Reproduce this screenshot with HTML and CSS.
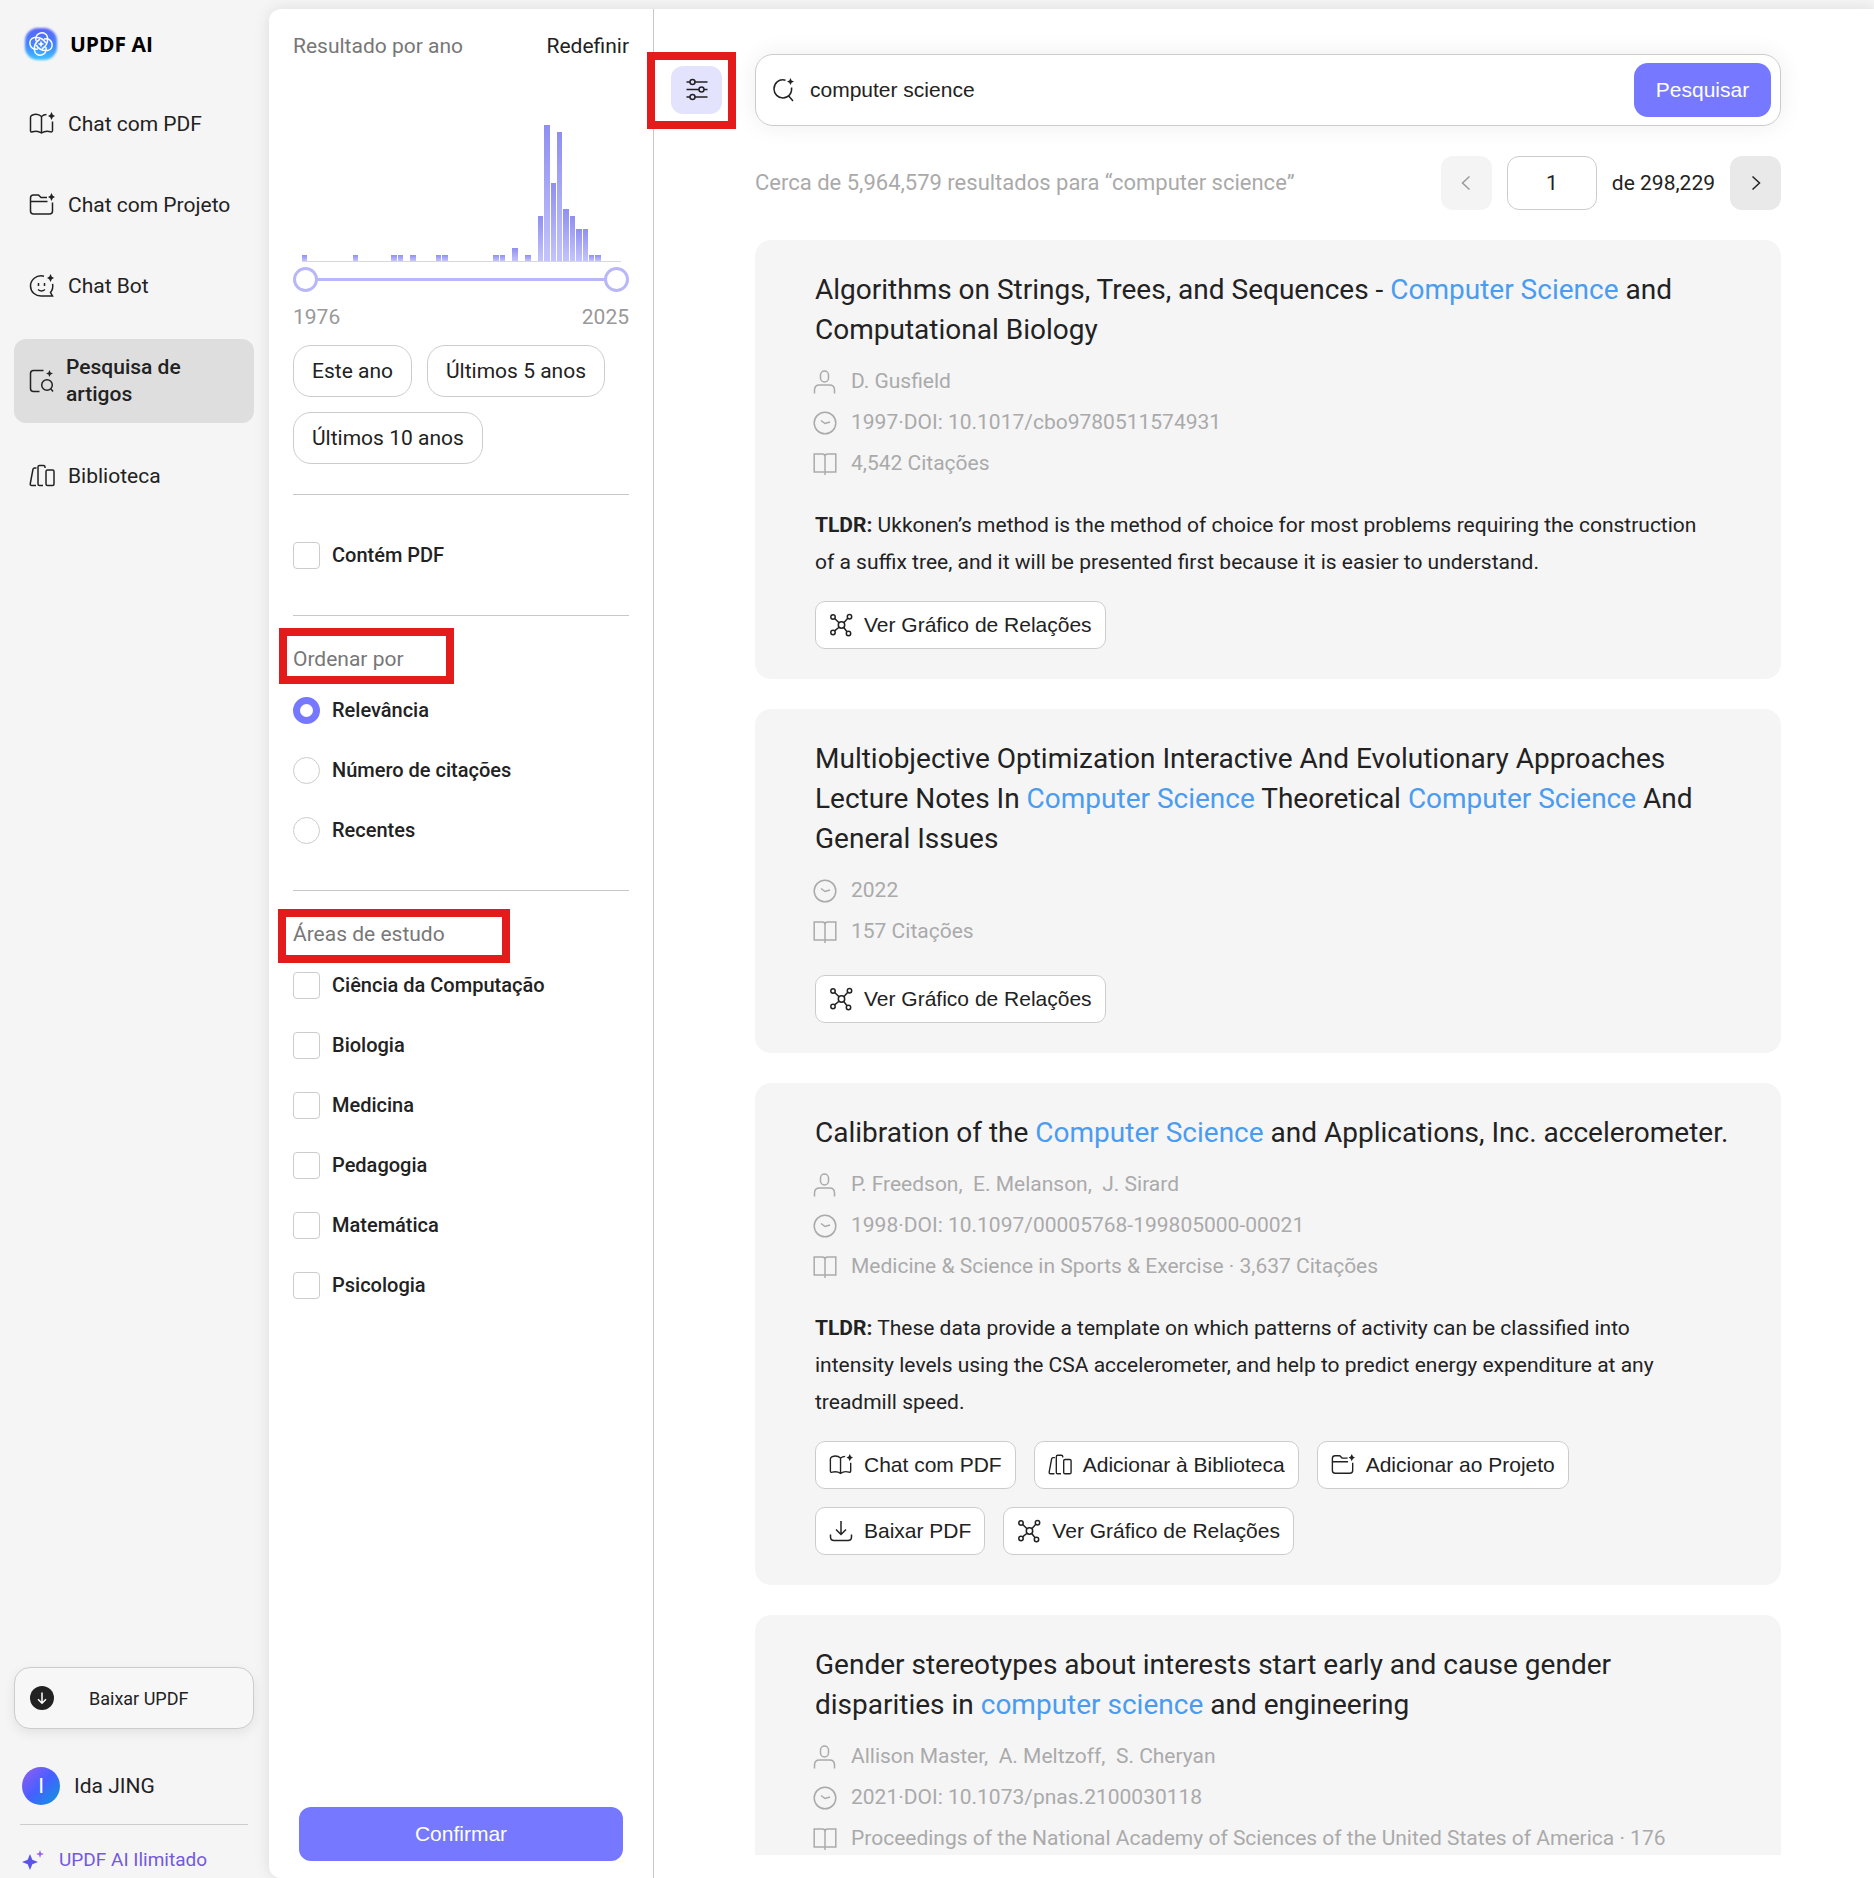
FILE: index.html
```html
<!DOCTYPE html>
<html lang="pt">
<head>
  <meta charset="UTF-8">
  <meta name="viewport" content="width=device-width, initial-scale=1">
  <title>UPDF AI - Pesquisa de artigos</title>
  <link rel="stylesheet" href="styles.css">
</head>
<body>
  <!-- Ícones -->
  <svg class="sprite" aria-hidden="true">
    <symbol id="i-chatpdf" viewBox="0 0 26 24">
      <path d="M12.5 4.5C10 2.200 6 1.800 3 3.200Q1.500 4 1.500 5.500V18.500Q1.500 20.500 3.500 19.800C7 18.800 9.500 19 12.500 21C15.500 19 18.500 18.800 21.500 19.800Q23.500 20.300 23.500 18.500V9.500M12.500 4.500V21M12.500 4.500C14 3.200 15.500 2.600 17.500 2.600"/>
      <path class="fill" d="M22.500 0L23.800 2.700L26 4L23.800 5.200L22.500 8L21.200 5.200L19 4L21.200 2.700Z"/>
    </symbol>
    <symbol id="i-folder" viewBox="0 0 26 24">
      <path d="M18 4.500H12L9.500 2H4.500Q1.500 2 1.500 5V18Q1.500 21 4.500 21H20.500Q23.500 21 23.500 18V9.500M1.500 8.500H18.500"/>
      <path class="fill" d="M22.500 0L23.800 2.700L26 4L23.800 5.200L22.500 8L21.200 5.200L19 4L21.200 2.700Z"/>
    </symbol>
    <symbol id="i-bot" viewBox="0 0 26 24">
      <path d="M15 2.200C7 .5 1.500 6 1.500 12C1.500 18 6.500 22 12 22H23.500L21.500 18.500C23.500 16 24.200 13 23.600 9.800M9.500 9V12M15.500 9V12M9 15.500Q12.500 18.500 16 15.500"/>
      <path class="fill" d="M21.500 0L22.800 2.700L25 4L22.800 5.200L21.500 8L20.200 5.200L18 4L20.200 2.700Z"/>
    </symbol>
    <symbol id="i-paper" viewBox="0 0 26 24">
      <path d="M14.500 1.500H4.500Q1.500 1.500 1.500 4.500V19.500Q1.500 22.500 4.500 22.500H10.500M22 20L24 22.500"/>
      <circle cx="18" cy="16" r="5.300"/>
      <path class="fill" d="M20.500 1L21.600 3.400L24 4.500L21.600 5.600L20.500 8L19.400 5.600L17 4.500L19.400 3.400Z"/>
    </symbol>
    <symbol id="i-library" viewBox="0 0 26 24">
      <path d="M7.500 4H5.500Q4.300 4 4 5.200L1.300 19.500Q1 21.500 2.800 21.500H7M16 4V3Q16 1.500 14.500 1.500H10.500Q9 1.500 9 3V20Q9 21.500 10.500 21.500H14"/>
      <rect x="17" y="6" width="8" height="15.500" rx="1.500"/>
    </symbol>
    <symbol id="i-graph" viewBox="0 0 24 24">
      <circle cx="12.500" cy="12" r="3.200"/><circle cx="4" cy="4" r="2.200"/><circle cx="20.500" cy="3.800" r="2.200"/>
      <circle cx="4" cy="19.500" r="2.200"/><circle cx="19.500" cy="20.500" r="2.200"/>
      <path d="M5.700 5.500L10 9.800M14.800 9.800L18.800 5.300M10 14.200L5.600 17.900M14.800 14.500L18 18.700"/>
    </symbol>
    <symbol id="i-download" viewBox="0 0 24 24">
      <path d="M12 2V15.500M7 10.500L12 15.500L17 10.500M1.500 15.500V18Q1.500 21.500 5 21.500H19Q22.500 21.500 22.500 18V15.500"/>
    </symbol>
    <symbol id="i-user" viewBox="0 0 24 24">
      <rect x="7.500" y="1" width="8" height="11" rx="4"/>
      <path d="M1.500 23.500V20Q1.500 15 6.500 15H16.500Q21.500 15 21.500 20V23.500"/>
    </symbol>
    <symbol id="i-clock" viewBox="0 0 24 24">
      <circle cx="12" cy="12" r="10.800"/><path d="M8 9.500L12 12.500L17 11"/>
    </symbol>
    <symbol id="i-book" viewBox="0 0 24 24">
      <path d="M12 23V4.500Q12 2 9.500 2H1.200V20H22.800V2H14.500Q12 2 12 4.500"/>
    </symbol>
    <symbol id="i-search" viewBox="0 0 24 24">
      <path d="M13.500 2.200C6.500 .5 2 5.500 2 11C2 16 6 20 11 20C16.500 20 20.500 15 19.500 9.500M16.500 17.800L21 23"/>
      <path class="fill" d="M18.500 0L19.600 2.400L22 3.500L19.600 4.700L18.500 7L17.300 4.700L15 3.500L17.300 2.400Z"/>
    </symbol>
    <symbol id="i-sliders" viewBox="0 0 24 24">
      <path d="M1.500 4H5M10 4H22.500M1.500 11.500H14M19 11.500H22.500M1.500 19H5M10 19H22.500"/>
      <circle cx="7.500" cy="4" r="2.500"/><circle cx="16.500" cy="11.500" r="2.500"/><circle cx="7.500" cy="19" r="2.500"/>
    </symbol>
    <symbol id="i-prev" viewBox="0 0 24 24"><path d="M15.500 5.500L8.500 12L15.500 18.500"/></symbol>
    <symbol id="i-next" viewBox="0 0 24 24"><path d="M8.500 5.500L15.500 12L8.500 18.500"/></symbol>
  </svg>

  <div class="app">
    <aside class="sidebar">
      <a class="brand" href="#">
        <svg class="brand-logo" viewBox="0 0 36 36">
          <defs>
            <linearGradient id="g-logo" x1="0" y1="0" x2="0" y2="1">
              <stop offset="0" stop-color="#5b63f8"/><stop offset=".55" stop-color="#3f86ff"/><stop offset="1" stop-color="#3fc4ff"/>
            </linearGradient>
            <filter id="f-soft"><feGaussianBlur stdDeviation="1"/></filter>
          </defs>
          <rect x="2" y="2" width="32" height="32" rx="13" fill="url(#g-logo)" filter="url(#f-soft)"/>
          <g fill="none" stroke="#fff" stroke-width="1.500" stroke-linecap="round">
            <path id="petal" d="M13 14.500C11 6 23.500 4 24.500 11.500C25 16 23.500 20 19.500 22.500"/>
            <use href="#petal" transform="rotate(90 18 18)"/>
            <use href="#petal" transform="rotate(180 18 18)"/>
            <use href="#petal" transform="rotate(270 18 18)"/>
          </g>
          <path d="M18 14.500L19 17L21.500 18L19 19L18 21.500L17 19L14.500 18L17 17Z" fill="#fff"/>
        </svg>
        <span>UPDF AI</span>
      </a>

      <nav class="menu">
        <a href="#"><svg class="icon"><use href="#i-chatpdf"/></svg>Chat com PDF</a>
        <a href="#"><svg class="icon"><use href="#i-folder"/></svg>Chat com Projeto</a>
        <a href="#"><svg class="icon"><use href="#i-bot"/></svg>Chat Bot</a>
        <a href="#" class="active"><svg class="icon"><use href="#i-paper"/></svg>Pesquisa de artigos</a>
        <a href="#"><svg class="icon"><use href="#i-library"/></svg>Biblioteca</a>
      </nav>

      <div class="sidebar-bottom">
        <button class="get-app" type="button">
          <svg viewBox="0 0 24 24"><circle cx="12" cy="12" r="12" fill="#222"/><path d="M12 6.500V17M8 13.200L12 17.200L16 13.200" fill="none" stroke="#fff" stroke-width="1.500"/></svg>
          <span>Baixar UPDF</span>
        </button>
        <div class="user"><span class="avatar">I</span><span>Ida JING</span></div>
        <a class="plan" href="#">
          <svg viewBox="0 0 22 20"><path d="M8 4L10.300 9.700L16 12L10.300 14.300L8 20L5.700 14.300L0 12L5.700 9.700Z" fill="#5b54e8"/><path d="M18 0L19 3L22 4L19 5L18 8L17 5L14 4L17 3Z" fill="#9a5ff0"/></svg>
          <span>UPDF AI Ilimitado</span>
        </a>
      </div>
    </aside>

    <main class="panel">
      <form class="filters" id="filters">
        <div class="filters-head">
          <h2>Resultado por ano</h2>
          <button class="reset" type="reset">Redefinir</button>
        </div>

        <div class="chart" id="chart"></div>
        <div class="range">
          <input type="range" min="1976" max="2025" value="1976" aria-label="Ano inicial">
          <input type="range" min="1976" max="2025" value="2025" aria-label="Ano final">
        </div>
        <div class="years"><span>1976</span><span>2025</span></div>

        <div class="chips">
          <button type="button">Este ano</button>
          <button type="button">Últimos 5 anos</button>
          <button type="button">Últimos 10 anos</button>
        </div>

        <hr>
        <label class="option"><input type="checkbox">Contém PDF</label>

        <hr>
        <h3 class="marked marked-sort">Ordenar por</h3>
        <label class="option"><input type="radio" name="sort" checked>Relevância</label>
        <label class="option"><input type="radio" name="sort">Número de citações</label>
        <label class="option"><input type="radio" name="sort">Recentes</label>

        <hr>
        <h3 class="marked marked-areas">Áreas de estudo</h3>
        <label class="option"><input type="checkbox">Ciência da Computação</label>
        <label class="option"><input type="checkbox">Biologia</label>
        <label class="option"><input type="checkbox">Medicina</label>
        <label class="option"><input type="checkbox">Pedagogia</label>
        <label class="option"><input type="checkbox">Matemática</label>
        <label class="option"><input type="checkbox">Psicologia</label>

        <button class="confirm" type="submit">Confirmar</button>
      </form>

      <section class="content">
        <div class="marked marked-toggle">
          <button class="toggle" type="button" aria-label="Filtros"><svg class="icon"><use href="#i-sliders"/></svg></button>
        </div>

        <div class="results">
          <form class="search" role="search">
            <svg class="icon"><use href="#i-search"/></svg>
            <input type="text" value="computer science" aria-label="Pesquisar artigos">
            <button type="submit">Pesquisar</button>
          </form>

          <div class="summary">
            <p>Cerca de 5,964,579 resultados para “computer science”</p>
            <div class="pager">
              <button type="button" disabled aria-label="Página anterior"><svg class="icon"><use href="#i-prev"/></svg></button>
              <input type="text" value="1" aria-label="Página">
              <span>de 298,229</span>
              <button type="button" aria-label="Próxima página"><svg class="icon"><use href="#i-next"/></svg></button>
            </div>
          </div>

          <div class="list">
            <article class="card">
              <h2>Algorithms on Strings, Trees, and Sequences - <em>Computer Science</em> and Computational Biology</h2>
              <ul class="meta">
                <li><svg class="icon"><use href="#i-user"/></svg>D. Gusfield</li>
                <li><svg class="icon"><use href="#i-clock"/></svg>1997·DOI: 10.1017/cbo9780511574931</li>
                <li><svg class="icon"><use href="#i-book"/></svg>4,542 Citações</li>
              </ul>
              <p class="tldr"><b>TLDR:</b> Ukkonen’s method is the method of choice for most problems requiring the construction of a suffix tree, and it will be presented first because it is easier to understand.</p>
              <div class="actions">
                <button type="button"><svg class="icon"><use href="#i-graph"/></svg>Ver Gráfico de Relações</button>
              </div>
            </article>

            <article class="card">
              <h2>Multiobjective Optimization Interactive And Evolutionary Approaches Lecture Notes In <em>Computer Science</em> Theoretical <em>Computer Science</em> And General Issues</h2>
              <ul class="meta">
                <li><svg class="icon"><use href="#i-clock"/></svg>2022</li>
                <li><svg class="icon"><use href="#i-book"/></svg>157 Citações</li>
              </ul>
              <div class="actions">
                <button type="button"><svg class="icon"><use href="#i-graph"/></svg>Ver Gráfico de Relações</button>
              </div>
            </article>

            <article class="card">
              <h2>Calibration of the <em>Computer Science</em> and Applications, Inc. accelerometer.</h2>
              <ul class="meta">
                <li><svg class="icon"><use href="#i-user"/></svg>P. Freedson,&nbsp; E. Melanson,&nbsp; J. Sirard</li>
                <li><svg class="icon"><use href="#i-clock"/></svg>1998·DOI: 10.1097/00005768-199805000-00021</li>
                <li><svg class="icon"><use href="#i-book"/></svg>Medicine &amp; Science in Sports &amp; Exercise · 3,637 Citações</li>
              </ul>
              <p class="tldr"><b>TLDR:</b> These data provide a template on which patterns of activity can be classified into intensity levels using the CSA accelerometer, and help to predict energy expenditure at any treadmill speed.</p>
              <div class="actions">
                <button type="button"><svg class="icon"><use href="#i-chatpdf"/></svg>Chat com PDF</button>
                <button type="button"><svg class="icon"><use href="#i-library"/></svg>Adicionar à Biblioteca</button>
                <button type="button"><svg class="icon"><use href="#i-folder"/></svg>Adicionar ao Projeto</button>
                <button type="button"><svg class="icon"><use href="#i-download"/></svg>Baixar PDF</button>
                <button type="button"><svg class="icon"><use href="#i-graph"/></svg>Ver Gráfico de Relações</button>
              </div>
            </article>

            <article class="card">
              <h2>Gender stereotypes about interests start early and cause gender disparities in <em>computer science</em> and engineering</h2>
              <ul class="meta">
                <li><svg class="icon"><use href="#i-user"/></svg>Allison Master,&nbsp; A. Meltzoff,&nbsp; S. Cheryan</li>
                <li><svg class="icon"><use href="#i-clock"/></svg>2021·DOI: 10.1073/pnas.2100030118</li>
                <li><svg class="icon"><use href="#i-book"/></svg>Proceedings of the National Academy of Sciences of the United States of America · 176</li>
              </ul>
            </article>
          </div>
        </div>
      </section>
    </main>
  </div>

  <script>
    // Artigos por ano, 1976 + índice
    const counts = {
      0: 6, 8: 6, 14: 6, 15: 6, 17: 6, 21: 6, 22: 6, 30: 6, 31: 6, 33: 13, 35: 6,
      37: 45, 38: 136, 39: 78, 40: 129, 41: 52, 42: 45, 43: 32, 44: 32, 45: 6, 46: 6
    };
    const max = 136;
    const chart = document.getElementById("chart");

    for (let i = 0; i < 50; i++) {
      const bar = document.createElement("span");
      bar.style.height = ((counts[i] || 0) / max) * 100 + "%";
      chart.appendChild(bar);
    }
  </script>
</body>
</html>
```
FILE: styles.css
```css
* {
  box-sizing: border-box;
}
body {
  margin: 0;
  background: #f5f5f5;
  color: #222;
  font-family: Roboto, "Liberation Sans", sans-serif;
  font-size: 21px;
  line-height: 30px;
}
h2, h3, p, ul {
  margin: 0;
  padding: 0;
  font-weight: 400;
}
button, input {
  font-family: "Liberation Sans", Arial, sans-serif;
  font-size: 21px;
  color: #222;
}
button {
  padding: 0;
  border: none;
  cursor: pointer;
}
a {
  color: inherit;
  text-decoration: none;
}
.sprite {
  position: absolute;
  width: 0;
  height: 0;
}
.icon {
  flex: none;
  width: 24px;
  height: 24px;
  fill: none;
  stroke: currentColor;
  stroke-width: 1.5;
}
.icon .fill, .fill {
  fill: currentColor;
  stroke: none;
}
.app {
  display: flex;
  height: 100vh;
  overflow: hidden;
}

/* Barra lateral */
.sidebar {
  display: flex;
  flex-direction: column;
  flex: none;
  width: 269px;
  padding: 26px 15px 3px 14px;
}
.brand {
  display: flex;
  align-items: center;
  gap: 11px;
  height: 36px;
  padding-left: 9px;
  color: #000;
  font-family: "Open Sans", sans-serif;
  font-size: 21px;
  font-weight: 700;
}
.brand-logo {
  width: 36px;
  height: 36px;
}
.menu {
  display: flex;
  flex-direction: column;
  gap: 25px;
  margin-top: 34px;
}
.menu a {
  display: flex;
  align-items: center;
  gap: 13px;
  min-height: 56px;
  padding: 0 15px;
  border-radius: 12px;
}
.menu .icon {
  width: 26px;
}
.menu .active {
  gap: 11px;
  min-height: 84px;
  padding-right: 50px;
  background: #dedede;
  font-weight: 500;
  line-height: 27px;
}
.sidebar-bottom {
  margin-top: auto;
}
.get-app {
  display: flex;
  align-items: center;
  width: 100%;
  height: 62px;
  padding: 0 15px;
  border: 1px solid #ccc;
  border-radius: 16px;
  background: #f7f7f7;
  box-shadow: 0 4px 12px rgba(0, 0, 0, 0.08);
  font-family: Roboto, sans-serif;
  font-size: 18px;
}
.get-app svg {
  width: 24px;
  height: 24px;
}
.get-app span {
  margin-left: 35px;
}
.user {
  display: flex;
  align-items: center;
  gap: 14px;
  margin: 38px 6px 0;
  padding: 0 2px 19px;
  border-bottom: 1px solid #ccc;
}
.avatar {
  width: 38px;
  height: 38px;
  border-radius: 50%;
  background: linear-gradient(135deg, #9a5cf0, #4560ff 50%, #0a9bd8);
  color: #fff;
  line-height: 38px;
  text-align: center;
}
.plan {
  display: flex;
  align-items: center;
  gap: 15px;
  height: 50px;
  padding: 20px 8px 0;
  color: #7259e0;
  font-size: 19px;
}
.plan svg {
  width: 22px;
  height: 20px;
}

/* Painel principal */
.panel {
  display: flex;
  flex: 1;
  min-width: 0;
  margin-top: 9px;
  border-radius: 12px 0 0 12px;
  background: #fff;
  box-shadow: 0 0 16px rgba(0, 0, 0, 0.1);
}
.filters {
  display: flex;
  flex-direction: column;
  flex: none;
  width: 385px;
  padding: 22px 24px 17px;
  border-right: 1px solid #c8c8c8;
}
.filters-head, .years {
  display: flex;
  justify-content: space-between;
  color: #777;
}
.filters h2, .filters h3 {
  color: #777;
  font-size: 21px;
}
.reset {
  background: none;
  font-family: Roboto, sans-serif;
  font-size: 21px;
}
.chart {
  display: flex;
  align-items: flex-end;
  height: 137px;
  margin: 64px 8px 0 9px;
  border-bottom: 1px solid #d8d8d8;
}
.chart span {
  flex: 1;
  border-right: 1px solid #fff;
  background: linear-gradient(#8f8ff2, #c4c4fb);
}
.range {
  position: relative;
  height: 25px;
  margin-top: 5px;
  background: linear-gradient(#b8b8f8, #b8b8f8) center / calc(100% - 40px) 3px no-repeat;
}
.range input {
  position: absolute;
  inset: 0;
  width: 100%;
  height: 25px;
  margin: 0;
  appearance: none;
  background: none;
  pointer-events: none;
}
.range input::-webkit-slider-thumb {
  width: 25px;
  height: 25px;
  border: 3px solid #b8b8f8;
  border-radius: 50%;
  appearance: none;
  background: #fff;
  pointer-events: auto;
}
.years {
  margin-top: 10px;
  color: #999;
}
.chips {
  display: flex;
  flex-wrap: wrap;
  gap: 15px;
  margin-top: 13px;
}
.chips button {
  height: 52px;
  padding: 0 18px;
  border: 1px solid #ccc;
  border-radius: 18px;
  background: #fff;
  font-family: Roboto, sans-serif;
  font-size: 21px;
}
hr {
  width: 100%;
  height: 1px;
  margin: 30px 0;
  border: none;
  background: #c8c8c8;
}
.filters h3 {
  margin: -2px 0 6px;
}
.option {
  display: flex;
  align-items: center;
  gap: 12px;
  height: 60px;
  font-size: 20px;
  font-weight: 500;
}
.option input {
  width: 27px;
  height: 27px;
  margin: 0;
  border: 1px solid #ccc;
  border-radius: 4px;
  appearance: none;
  background: #fff;
}
.option input[type="radio"] {
  border-radius: 50%;
}
.option input:checked {
  border: 7px solid #7678ff;
}
.confirm {
  height: 54px;
  margin: auto 6px 0;
  border-radius: 12px;
  background: #7678ff;
  color: #fff;
}

/* Destaques em vermelho */
.marked {
  position: relative;
}
.marked::after {
  content: "";
  position: absolute;
  box-sizing: border-box;
  border: 8px solid #e41b1b;
  pointer-events: none;
}
.marked-sort::after {
  inset: -16px auto -10px -14px;
  width: 175px;
}
.marked-areas::after {
  inset: -10px auto -14px -15px;
  width: 232px;
}
.marked-toggle::after {
  inset: -14px -14px -15px -24px;
}

/* Resultados */
.content {
  display: flex;
  align-items: flex-start;
  flex: 1;
  gap: 33px;
  min-width: 0;
  height: 100%;
  padding: 45px 93px 23px 17px;
}
.marked-toggle {
  flex: none;
  margin-top: 12px;
}
.toggle {
  display: flex;
  align-items: center;
  justify-content: center;
  width: 51px;
  height: 48px;
  border-radius: 12px;
  background: #e4e3fe;
}
.results {
  display: flex;
  flex-direction: column;
  flex: 1;
  min-width: 0;
  height: 100%;
}
.search {
  display: flex;
  align-items: center;
  flex: none;
  gap: 14px;
  height: 72px;
  padding: 0 9px 0 16px;
  border: 1px solid #ccc;
  border-radius: 18px;
  background: #fff;
  box-shadow: 0 0 24px rgba(60, 30, 60, 0.07);
}
.search input {
  flex: 1;
  min-width: 0;
  padding: 0;
  border: none;
  outline: none;
}
.search button {
  width: 137px;
  height: 54px;
  border-radius: 14px;
  background: #7678ff;
  color: #fff;
}
.summary {
  display: flex;
  align-items: center;
  justify-content: space-between;
  flex: none;
  margin: 30px 0;
  color: #aaa;
}
.summary p {
  font-size: 22px;
}
.pager {
  display: flex;
  align-items: center;
  gap: 15px;
  color: #222;
}
.pager button {
  display: flex;
  align-items: center;
  justify-content: center;
  width: 51px;
  height: 54px;
  border-radius: 12px;
  background: #e9e9e9;
}
.pager button:disabled {
  background: #f5f4f5;
  color: #999;
}
.pager input {
  width: 90px;
  height: 54px;
  border: 1px solid #ccc;
  border-radius: 12px;
  font-family: Roboto, sans-serif;
  text-align: center;
}
.list {
  display: flex;
  flex-direction: column;
  flex: 1;
  gap: 30px;
  min-height: 0;
  overflow: hidden;
}
.card {
  flex: none;
  padding: 30px 50px 30px 60px;
  border-radius: 16px;
  background: #f5f5f6;
}
.card h2 {
  font-size: 28px;
  line-height: 40px;
}
.card em {
  color: #4a9cf0;
  font-style: normal;
}
.meta {
  margin: 11px 0 23px;
  color: #aaa;
  line-height: 41px;
  list-style: none;
}
.meta li {
  display: flex;
  align-items: center;
  gap: 14px;
  margin-left: -2px;
  white-space: nowrap;
}
.tldr {
  margin-bottom: 20px;
  padding-right: 30px;
  line-height: 37px;
}
.actions {
  display: flex;
  flex-wrap: wrap;
  gap: 18px;
}
.actions button {
  display: flex;
  align-items: center;
  gap: 11px;
  height: 48px;
  padding: 0 13px;
  border: 1px solid #ccc;
  border-radius: 10px;
  background: #fff;
}
```
